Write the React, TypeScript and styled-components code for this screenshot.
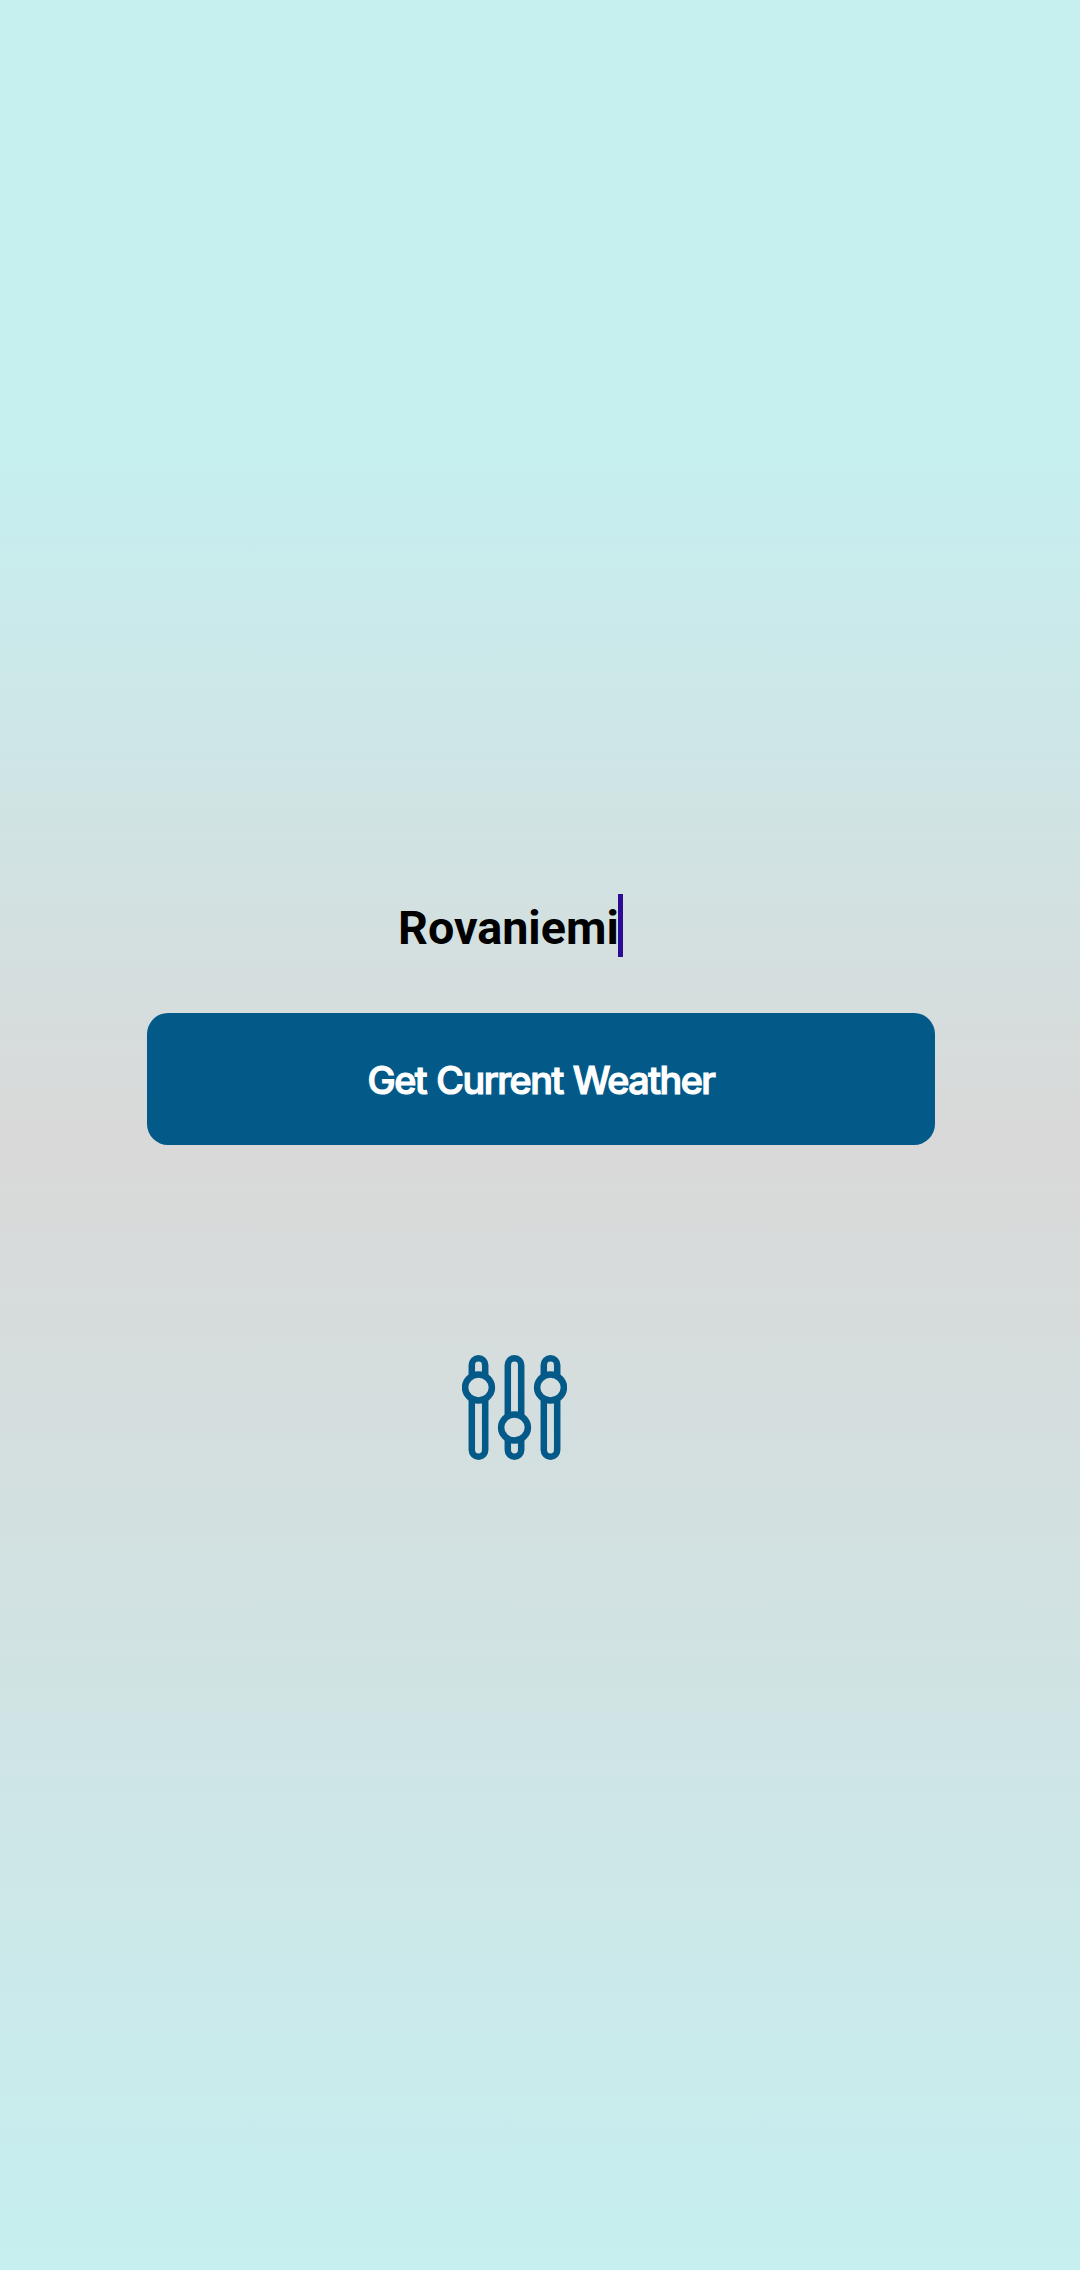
import React from 'react';
import styled, { createGlobalStyle } from 'styled-components';

const GlobalStyle = createGlobalStyle`
  body {
    margin: 0;
  }
`;

const Screen = styled.main`
  display: flex;
  flex-direction: column;
  box-sizing: border-box;
  width: 100%;
  min-height: 2270px;
  padding: 894px 145px 0 147px;
  background: linear-gradient(
    180deg,
    #c6eff0 0,
    #c6eff0 460px,
    #d9d9d9 1130px,
    #d9d9d9 1160px,
    #c6eff0 2270px
  );
`;

const CityField = styled.div`
  display: flex;
  align-items: center;
  height: 63px;
  margin-left: 251px;
`;

const CityName = styled.span`
  box-sizing: border-box;
  width: 220px;
  height: 63px;
  padding-top: 3px;
  color: #000;
  font: 700 46.7px/63px Roboto, sans-serif;
  white-space: nowrap;
`;

const Caret = styled.span`
  width: 5px;
  height: 63px;
  background: #2b0c93;
`;

const WeatherButton = styled.button`
  height: 132px;
  margin-top: 56px;
  padding: 2px 0 0;
  border: 0;
  border-radius: 21px;
  background: #035a89;
  color: #fff;
  font: 500 37.7px/46px Inter, sans-serif;
  letter-spacing: -1.5px;
  word-spacing: 1.6px;
  -webkit-text-stroke: 1.2px #fff;
`;

const SettingsButton = styled.button`
  align-self: flex-start;
  display: flex;
  margin: 210px 0 0 315px;
  padding: 0;
  border: 0;
  background: none;
  color: #035a89;
`;

const SLIDERS = [
  { x: 16.5, knob: 32.5 },
  { x: 52.5, knob: 72.5 },
  { x: 88.5, knob: 32.5 },
];

function SlidersIcon() {
  return (
    <svg width="105" height="105" viewBox="0 0 105 105" fill="none" stroke="currentColor" strokeWidth="6.5">
      {SLIDERS.map(({ x, knob }) => {
        const top = knob - 12.8;
        const bottom = knob + 12.8;
        return (
          <g key={x}>
            <path d={`M${x - 6.7} ${top + 2}V10a6.7 6.7 0 0 1 13.4 0V${top + 2}`} />
            <path d={`M${x - 6.7} ${bottom - 2}V95a6.7 6.7 0 0 0 13.4 0V${bottom - 2}`} />
            <ellipse cx={x} cy={knob} rx="13.4" ry="12.9" />
          </g>
        );
      })}
    </svg>
  );
}

export default function App() {
  return (
    <>
      <GlobalStyle />
      <Screen>
        <CityField>
          <CityName>Rovaniemi</CityName>
          <Caret />
        </CityField>
        <WeatherButton type="button">Get Current Weather</WeatherButton>
        <SettingsButton type="button" aria-label="Settings">
          <SlidersIcon />
        </SettingsButton>
      </Screen>
    </>
  );
}
